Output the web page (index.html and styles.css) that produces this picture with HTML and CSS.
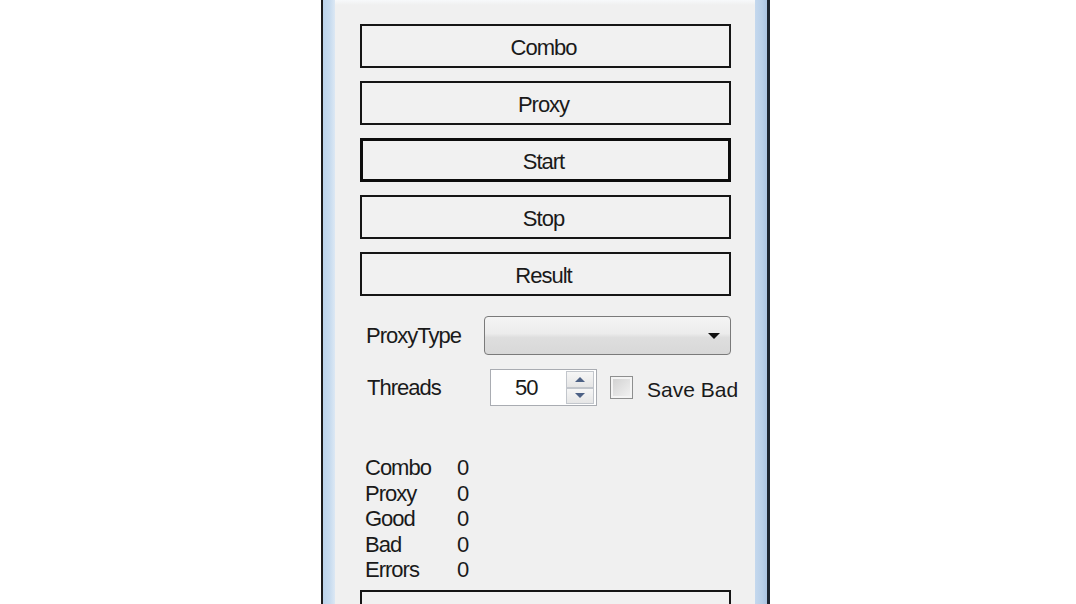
FILE: index.html
```html
<!DOCTYPE html>
<html>
<head>
<meta charset="utf-8">
<link rel="stylesheet" href="styles.css">
</head>
<body>
<div class="page">
  <div class="window">
    <div class="frame frame-left"></div>
    <div class="content">
      <div class="buttons">
        <div class="btn">Combo</div>
        <div class="btn">Proxy</div>
        <div class="btn btn-default">Start</div>
        <div class="btn">Stop</div>
        <div class="btn">Result</div>
      </div>
      <div class="row row-type">
        <div class="label label-type">ProxyType</div>
        <div class="combo"><span class="combo-arrow"></span></div>
      </div>
      <div class="row row-threads">
        <div class="label label-threads">Threads</div>
        <div class="numeric">
          <span class="num-value">50</span>
          <div class="spin">
            <div class="spin-btn"><span class="tri-up"></span></div>
            <div class="spin-btn"><span class="tri-down"></span></div>
          </div>
        </div>
        <div class="check"></div>
        <div class="check-label">Save Bad</div>
      </div>
      <div class="stats">
        <div class="stat"><span class="stat-name">Combo</span><span class="stat-val">0</span></div>
        <div class="stat"><span class="stat-name">Proxy</span><span class="stat-val">0</span></div>
        <div class="stat"><span class="stat-name">Good</span><span class="stat-val">0</span></div>
        <div class="stat"><span class="stat-name">Bad</span><span class="stat-val">0</span></div>
        <div class="stat"><span class="stat-name">Errors</span><span class="stat-val">0</span></div>
      </div>
      <div class="btn btn-bottom">Tools</div>
    </div>
    <div class="frame frame-right"></div>
  </div>
</div>
</body>
</html>
```
FILE: styles.css
```css
html, body {
  margin: 0;
  padding: 0;
  background: #ffffff;
}
.page {
  width: 1076px;
  height: 604px;
  overflow: hidden;
  background: #ffffff;
}
.window {
  margin-left: 321px;
  width: 449px;
  height: 604px;
  display: flex;
  border-left: 2px solid #1c1c1c;
  border-right: 3px solid #1c2530;
  box-sizing: border-box;
}
.frame {
  width: 12px;
  flex: none;
}
.frame-left {
  background: linear-gradient(to right, #bcd3ea, #c9dcef 60%, #dce8f4);
}
.frame-right {
  background: linear-gradient(to right, #c4d8ee, #b8cfe8 60%, #aac4e2);
}
.content {
  width: 420px;
  flex: none;
  background: #f0f0f0;
  padding-top: 24px;
  padding-left: 25px;
  box-sizing: border-box;
  font-family: "Liberation Sans", Arial, sans-serif;
  font-size: 22px;
  letter-spacing: -1px;
  color: #1a1a1a;
  background-image: linear-gradient(to bottom, #f7f9fb 0, #f0f0f0 5px);
}
.buttons {
  display: flex;
  flex-direction: column;
  gap: 13px;
}
.btn {
  width: 371px;
  height: 44px;
  box-sizing: border-box;
  border: 2px solid #151515;
  background: #f1f1f1;
  display: flex;
  align-items: center;
  justify-content: center;
  padding-top: 3px;
  padding-right: 4px;
}
.btn-default {
  border-width: 3px;
  border-color: #0c0c0c;
}
.row {
  display: flex;
  align-items: center;
}
.row-type {
  margin-top: 20px;
  height: 39px;
}
.label-type {
  margin-left: 6px;
  width: 118px;
}
.combo {
  width: 247px;
  height: 39px;
  box-sizing: border-box;
  border: 1px solid #7a7a7a;
  border-radius: 4px;
  background: linear-gradient(to bottom, #f4f4f4 0%, #ececec 45%, #dedede 55%, #d8d8d8 100%);
  display: flex;
  align-items: center;
  justify-content: flex-end;
  padding-right: 10px;
}
.combo-arrow {
  width: 0;
  height: 0;
  border-left: 6px solid transparent;
  border-right: 6px solid transparent;
  border-top: 6px solid #111;
}
.row-threads {
  margin-top: 14px;
  height: 37px;
}
.label-threads {
  margin-left: 7px;
  width: 123px;
}
.numeric {
  width: 107px;
  height: 37px;
  box-sizing: border-box;
  border: 1px solid #a9acb2;
  background: #ffffff;
  display: flex;
  align-items: center;
  padding-left: 24px;
  padding-right: 2px;
}
.num-value {
  flex: 1;
}
.spin {
  width: 28px;
  height: 33px;
  display: flex;
  flex-direction: column;
}
.spin-btn {
  flex: 1;
  box-sizing: border-box;
  border: 1px solid #c2c6cc;
  background: linear-gradient(to bottom, #f6f6f6, #e6e6e6);
  display: flex;
  align-items: center;
  justify-content: center;
}
.tri-up {
  width: 0;
  height: 0;
  border-left: 5px solid transparent;
  border-right: 5px solid transparent;
  border-bottom: 5px solid #4d6185;
}
.tri-down {
  width: 0;
  height: 0;
  border-left: 5px solid transparent;
  border-right: 5px solid transparent;
  border-top: 5px solid #4d6185;
}
.check {
  margin-left: 13px;
  width: 23px;
  height: 23px;
  box-sizing: border-box;
  border: 1px solid #8e8f8f;
  background: linear-gradient(135deg, #cfcfcf, #f4f4f4);
  box-shadow: inset 0 0 0 2px #f4f4f4;
}
.check-label {
  margin-left: 14px;
  margin-top: 4px;
  font-size: 21px;
  letter-spacing: 0;
}
.stats {
  margin-top: 49px;
  margin-left: 5px;
}
.stat {
  display: flex;
  height: 25.5px;
  line-height: 25.5px;
}
.stat-name {
  width: 92px;
}
.btn-bottom {
  margin-top: 7px;
  align-items: flex-start;
  padding-top: 10px;
}
```
